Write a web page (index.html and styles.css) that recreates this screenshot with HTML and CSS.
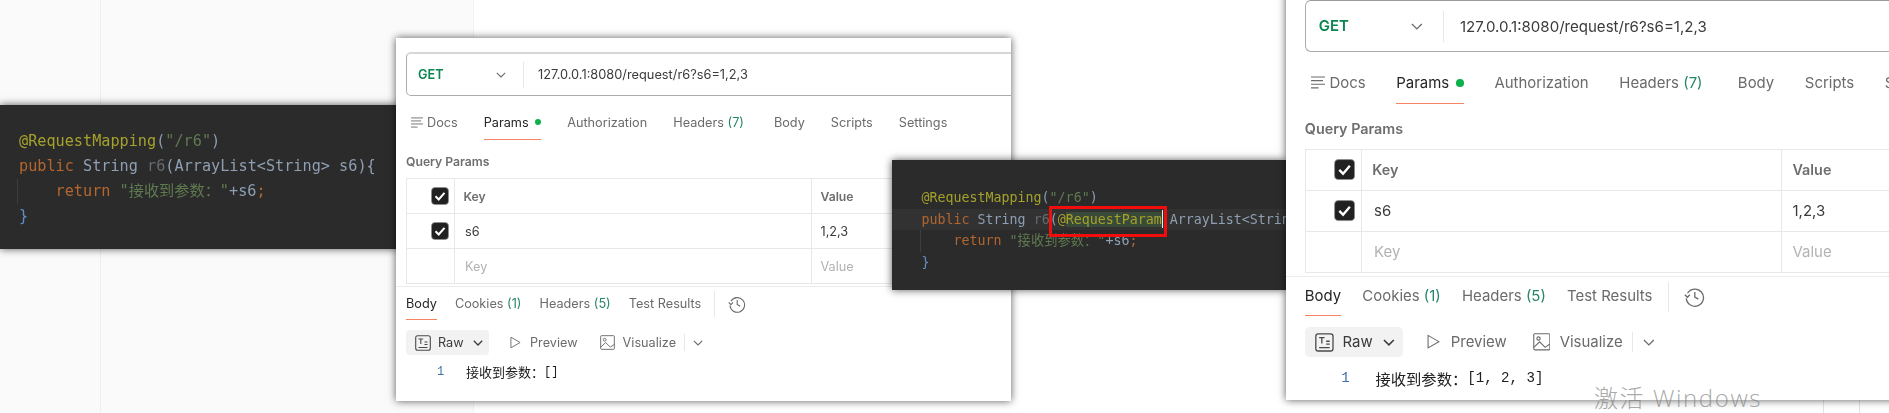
FILE: index.html
```html
<!DOCTYPE html>
<html lang="zh">
<head>
<meta charset="utf-8">
<title>RequestParam</title>
<link rel="stylesheet" href="styles.css">
</head>
<body>
<div class="desk">
  <div class="nav"></div>
  <div class="content"></div>
  <div class="rules"></div>

  <pre class="code code-one"><span class="ann">@RequestMapping</span><span class="pun">(</span><span class="str">"/r6"</span><span class="pun">)</span>
<span class="kw">public</span> <span class="typ">String</span> <span class="dim">r6</span><span class="typ">(ArrayList&lt;String&gt; s6){</span>
<span class="indent"><span class="kw">return</span> <span class="str">"接收到参数："</span><span class="typ">+s6</span><span class="kw">;</span></span>
<span class="brace">}</span></pre>

  <div class="shell shell-one">
    <div class="panel">
      <div class="urlbar">
        <div class="method"><span class="get">GET</span>
          <svg class="chev" viewBox="0 0 10 6"><path d="M.8.8 5 5 9.2.8"/></svg></div>
        <div class="url">127.0.0.1:8080/request/r6?s6=1,2,3</div>
      </div>
      <div class="tabs">
        <div class="tab docs"><svg class="ico-docs" viewBox="0 0 13 12"><path d="M0 1h13M0 4.3h11M0 7.6h13M0 11h7"/></svg>Docs</div>
        <div class="tab on">Params<i class="dot"></i></div>
        <div class="tab">Authorization</div>
        <div class="tab">Headers <span class="num">(7)</span></div>
        <div class="tab wide">Body</div>
        <div class="tab">Scripts</div>
        <div class="tab">Settings</div>
      </div>
      <div class="qtitle">Query Params</div>
      <div class="ptable">
        <div class="cell chk"><svg class="box" viewBox="0 0 18 18"><rect x=".5" y=".5" width="17" height="17" rx="3.5"/><path d="M4.5 9.3 7.7 12.5 13.5 5.8"/></svg></div>
        <div class="cell head">Key</div>
        <div class="cell head val">Value</div>
        <div class="cell chk"><svg class="box" viewBox="0 0 18 18"><rect x=".5" y=".5" width="17" height="17" rx="3.5"/><path d="M4.5 9.3 7.7 12.5 13.5 5.8"/></svg></div>
        <div class="cell txt">s6</div>
        <div class="cell txt val">1,2,3</div>
        <div class="cell chk"></div>
        <div class="cell hint">Key</div>
        <div class="cell hint val">Value</div>
      </div>
      <div class="split"></div>
      <div class="rtabs">
        <div class="tab on">Body</div>
        <div class="tab">Cookies <span class="num">(1)</span></div>
        <div class="tab">Headers <span class="num">(5)</span></div>
        <div class="tab">Test Results</div>
        <div class="vsep"></div>
        <svg class="ico-hist" viewBox="0 0 18 18"><path d="M3 6.2A7.3 7.3 0 1 1 2 10.5M.7 7.4 2.9 9.6 5 7.4M9.2 5v4.4l3 1.8"/></svg>
      </div>
      <div class="viewbar">
        <div class="rawbtn"><svg class="ico-raw" viewBox="0 0 16 16"><rect x=".7" y=".7" width="14.6" height="14.6" rx="2"/><path d="M3.5 4h4.6M5.8 4v5M3.5 12.5h9M9.5 7h3M9.5 9.5h3"/></svg>Raw<svg class="chev dark" viewBox="0 0 10 6"><path d="M.8.8 5 5 9.2.8"/></svg></div>
        <div class="viewopt prev"><svg class="ico-play" viewBox="0 0 12 14"><path d="M1 1.2 11 7 1 12.8z"/></svg>Preview</div>
        <div class="viewopt vis"><svg class="ico-img" viewBox="0 0 16 16"><rect x=".7" y=".7" width="14.6" height="14.6" rx="1"/><circle cx="5" cy="5" r="1.5"/><path d="M.7 13 6 8l5 5 4.3-3"/></svg>Visualize</div>
        <div class="vsep small"></div>
        <svg class="chev lone" viewBox="0 0 10 6"><path d="M.8.8 5 5 9.2.8"/></svg>
      </div>
      <div class="output"><span class="ln">1</span><span class="zh">接收到参数：</span><span class="mono">[]</span></div>
    </div>
  </div>

  <pre class="code code-two"><span class="ann">@RequestMapping</span><span class="pun">(</span><span class="str">"/r6"</span><span class="pun">)</span>
<span class="current"><span class="kw">public</span> <span class="typ">String</span> <span class="dim">r6</span><span class="typ">(</span><span class="ann">@<span class="sel">RequestParam</span></span><span class="caret"></span> <span class="typ">ArrayList&lt;String&gt; s6){</span></span><span class="indent"><span class="kw">return</span> <span class="str">"接收到参数："</span><span class="typ">+s6</span><span class="kw">;</span></span>
<span class="brace">}</span><span class="redbox"></span></pre>

  <div class="shell shell-two">
    <div class="panel panel-large">
      <div class="urlbar">
        <div class="method"><span class="get">GET</span>
          <svg class="chev" viewBox="0 0 10 6"><path d="M.8.8 5 5 9.2.8"/></svg></div>
        <div class="url">127.0.0.1:8080/request/r6?s6=1,2,3</div>
      </div>
      <div class="tabs">
        <div class="tab docs"><svg class="ico-docs" viewBox="0 0 13 12"><path d="M0 1h13M0 4.3h11M0 7.6h13M0 11h7"/></svg>Docs</div>
        <div class="tab on">Params<i class="dot"></i></div>
        <div class="tab">Authorization</div>
        <div class="tab">Headers <span class="num">(7)</span></div>
        <div class="tab wide">Body</div>
        <div class="tab">Scripts</div>
        <div class="tab">Settings</div>
      </div>
      <div class="qtitle">Query Params</div>
      <div class="ptable">
        <div class="cell chk"><svg class="box" viewBox="0 0 18 18"><rect x=".5" y=".5" width="17" height="17" rx="3.5"/><path d="M4.5 9.3 7.7 12.5 13.5 5.8"/></svg></div>
        <div class="cell head">Key</div>
        <div class="cell head val">Value</div>
        <div class="cell chk"><svg class="box" viewBox="0 0 18 18"><rect x=".5" y=".5" width="17" height="17" rx="3.5"/><path d="M4.5 9.3 7.7 12.5 13.5 5.8"/></svg></div>
        <div class="cell txt">s6</div>
        <div class="cell txt val">1,2,3</div>
        <div class="cell chk"></div>
        <div class="cell hint">Key</div>
        <div class="cell hint val">Value</div>
      </div>
      <div class="split"></div>
      <div class="rtabs">
        <div class="tab on">Body</div>
        <div class="tab">Cookies <span class="num">(1)</span></div>
        <div class="tab">Headers <span class="num">(5)</span></div>
        <div class="tab">Test Results</div>
        <div class="vsep"></div>
        <svg class="ico-hist" viewBox="0 0 18 18"><path d="M3 6.2A7.3 7.3 0 1 1 2 10.5M.7 7.4 2.9 9.6 5 7.4M9.2 5v4.4l3 1.8"/></svg>
      </div>
      <div class="viewbar">
        <div class="rawbtn"><svg class="ico-raw" viewBox="0 0 16 16"><rect x=".7" y=".7" width="14.6" height="14.6" rx="2"/><path d="M3.5 4h4.6M5.8 4v5M3.5 12.5h9M9.5 7h3M9.5 9.5h3"/></svg>Raw<svg class="chev dark" viewBox="0 0 10 6"><path d="M.8.8 5 5 9.2.8"/></svg></div>
        <div class="viewopt prev"><svg class="ico-play" viewBox="0 0 12 14"><path d="M1 1.2 11 7 1 12.8z"/></svg>Preview</div>
        <div class="viewopt vis"><svg class="ico-img" viewBox="0 0 16 16"><rect x=".7" y=".7" width="14.6" height="14.6" rx="1"/><circle cx="5" cy="5" r="1.5"/><path d="M.7 13 6 8l5 5 4.3-3"/></svg>Visualize</div>
        <div class="vsep small"></div>
        <svg class="chev lone" viewBox="0 0 10 6"><path d="M.8.8 5 5 9.2.8"/></svg>
      </div>
      <div class="output"><span class="ln">1</span><span class="zh">接收到参数：</span><span class="mono">[1, 2, 3]</span></div>
    </div>
  </div>

  <div class="watermark">激活 Windows</div>
</div>
</body>
</html>
```
FILE: styles.css
```css
* { box-sizing: border-box; }
html, body { margin: 0; padding: 0; background: #fff; }
.desk {
  position: relative;
  display: flex;
  width: 1889px;
  height: 413px;
  overflow: hidden;
  background: #fff;
  font-family: Inter, "Noto Sans CJK SC", sans-serif;
}
.nav { width: 101px; background: #fafafa; border-right: 1px solid #eeeeee; }
.content { width: 373px; background: #fafafa; border-right: 1px solid #f2f2f2; }
.rules {
  position: absolute;
  left: 1823px; top: 395px;
  width: 37px; height: 18px;
  border-left: 1px solid #e4e4e4;
  border-right: 1px solid #e4e4e4;
}

/* code snippets */
.code {
  position: absolute;
  margin: 0;
  overflow: hidden;
  white-space: pre;
  background: #2b2b2b;
  color: #a9b7c6;
  box-shadow: 0 0 8px rgba(0, 0, 0, .65);
  font-family: "DejaVu Sans Mono", "Noto Sans CJK SC", monospace;
  filter: blur(.3px);
}
.code-one {
  left: 0; top: 105px;
  width: 400px; height: 144px;
  padding: 23.5px 0 0 19px;
  font-size: 15.2px;
  line-height: 25px;
}
.code-two {
  left: 892px; top: 160px;
  width: 394px; height: 130px;
  padding: 27px 0 0 29.5px;
  font-size: 13.3px;
  line-height: 21.6px;
}
.ann { color: #a5a22c; }
.pun { color: #8c9cae; }
.str { color: #5f7a50; }
.kw { color: #b4662e; }
.typ { color: #8f9fb3; }
.dim { color: #666a6e; }
.brace { color: #5f8fc4; }
.indent {
  display: inline-block;
  margin-left: -2px;
  padding-left: calc(4ch + 1px);
  border-left: 1px solid #3d3d3d;
}
.current {
  display: block;
  margin-left: -29.5px;
  padding-left: 29.5px;
  background: #323232;
}
.sel { background: #3a4a38; color: #a5a22c; }
.caret {
  display: inline-block;
  width: 1.5px; height: 18px;
  margin-right: -1.5px;
  vertical-align: -4px;
  background: #e8e8e8;
}
.redbox {
  position: absolute;
  left: 157px; top: 46px;
  width: 118px; height: 31px;
  border: 3px solid #f20d0d;
}

/* request windows */
.shell {
  position: absolute;
  overflow: hidden;
  background: #fff;
  box-shadow: 0 0 8px rgba(0, 0, 0, .65);
  filter: blur(.3px);
}
.shell-one { left: 396px; top: 38px; width: 615px; height: 363px; }
.shell-two { left: 1286px; top: -16px; width: 610px; height: 416px; }
.panel {
  width: 615px;
  height: 363px;
  padding: 14px 0 0 10px;
  font-size: 12.7px;
  color: #6b6b6b;
}
.panel-large {
  zoom: 1.177;
  width: 520px;
  height: 354px;
  padding-left: 16px;
}
.urlbar {
  display: flex;
  align-items: center;
  height: 44px;
  margin-right: -6px;
  border: 1px solid #ababab;
  border-top: 2px solid #d6d6d6;
  border-radius: 5px;
  color: #3b3b3b;
}
.panel-large .urlbar { border-top-color: #9a9a9a; border-top-width: 1px; }
.method {
  display: flex;
  align-items: center;
  justify-content: space-between;
  width: 117px;
  height: 26px;
  padding: 0 17px 0 11px;
  border-right: 1px solid #e6e6e6;
}
.get { color: #0b8650; font-weight: 600; }
.url { padding-left: 14px; font-size: 12.8px; }
.chev { width: 10px; height: 6px; fill: none; stroke: #6b6b6b; stroke-width: 1.1; }
.chev.dark { stroke: #3b3b3b; stroke-width: 1.3; margin-left: 9px; }
.chev.lone { margin-left: 8px; }

.tabs, .rtabs { display: flex; gap: 26px; align-items: stretch; }
.tabs { height: 44px; padding-left: 5px; }
.tab {
  display: flex;
  align-items: center;
  white-space: pre;
  padding-top: 9px;
  border-bottom: 1.5px solid transparent;
}
.tab.on { color: #262626; border-bottom-color: #f7825f; }
.tab.wide { margin-left: 4px; }
.num { color: #27866a; }
.dot {
  width: 6.5px; height: 6.5px;
  margin-left: 6px;
  border-radius: 50%;
  background: #0cb14b;
}
.ico-docs { width: 12px; height: 11px; margin-right: 4px; fill: none; stroke: #6b6b6b; stroke-width: 1; }

.qtitle { height: 38px; padding: 13.5px 0 0 0; font-weight: 600; font-size: 12.2px; line-height: 16px; color: #6e6e6e; }
.ptable {
  display: grid;
  grid-template-columns: 47.5px 357px 1fr;
  grid-auto-rows: 35px;
  margin: 0;
  border: 1px solid #e8e8e8;
  border-right: 0;
  border-bottom: 0;
}
.cell {
  display: flex;
  align-items: center;
  padding-left: 9px;
  border-right: 1px solid #e8e8e8;
  border-bottom: 1px solid #e8e8e8;
}
.chk { justify-content: flex-end; padding: 0 5px 0 0; }
.head { font-weight: 600; font-size: 12.2px; color: #6e6e6e; }
.txt { padding-left: 10.5px; color: #3b3b3b; }
.hint { padding-left: 10.5px; color: #b3b3b3; }
.val { padding-left: 9px; }
.box { width: 18px; height: 18px; }
.box rect { fill: #212121; stroke: #8f8f8f; stroke-width: .7; }
.box path { fill: none; stroke: #fff; stroke-width: 2; }

.split { height: 1px; margin: 2px 0 0 -16px; background: #ececec; }
.rtabs { height: 33px; gap: 18px; align-items: stretch; }
.rtabs .tab { padding-top: 0; }
.vsep { width: 1px; height: 26px; margin: 4px 0 0 -5px; background: #e8e8e8; }
.vsep.small { height: 17px; margin: 0 0 0 8px; }
.ico-hist {
  width: 18px; height: 18px;
  margin: 8px 0 0 -5px;
  fill: none; stroke: #6b6b6b; stroke-width: 1.1;
}
.viewbar {
  display: flex;
  align-items: center;
  height: 25px;
  margin: 10px 0 0 0;
}
.rawbtn {
  display: flex;
  align-items: center;
  width: 83px;
  height: 25px;
  padding-left: 9px;
  border-radius: 4px;
  background: #f2f2f2;
  color: #3b3b3b;
}
.viewopt { display: flex; align-items: center; }
.prev { margin-left: 21px; }
.vis { margin-left: 22px; }
.ico-raw { width: 16px; height: 16px; margin-right: 7px; fill: none; stroke: #4a4a4a; stroke-width: 1.1; }
.ico-play { width: 11px; height: 13px; margin-right: 9px; fill: none; stroke: #6b6b6b; stroke-width: 1; }
.ico-img { width: 15px; height: 15px; margin-right: 8px; fill: none; stroke: #6b6b6b; stroke-width: 1; }
.output {
  display: flex;
  align-items: center;
  height: 20px;
  margin-top: 6.5px;
  color: #212121;
}
.panel-large .output { margin-top: 8px; }
.ln { margin-left: 31px; width: 29px; font: 12px "Liberation Mono", monospace; color: #3f6fa8; }
.zh { font-size: 13px; font-family: "Noto Sans CJK SC", sans-serif; }
.mono { font: 12px "Liberation Mono", monospace; }

.watermark {
  position: absolute;
  left: 1594px; top: 381px;
  font: 300 24px/34px "Open Sans", "Noto Sans CJK SC", sans-serif;
  letter-spacing: 1.6px;
  color: rgba(120, 120, 120, .65);
  white-space: nowrap;
}
```
